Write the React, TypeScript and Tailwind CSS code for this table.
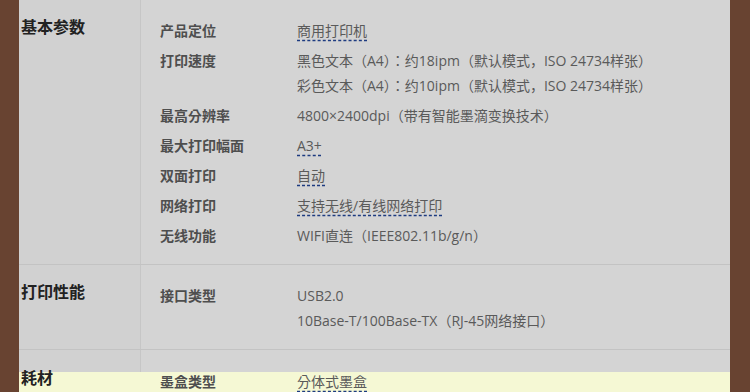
interface SpecRow {
  label: string;
  values: string[];
  dashed?: boolean;
}

interface SpecGroup {
  title: string;
  rows: SpecRow[];
}

const groups: SpecGroup[] = [
  {
    title: "基本参数",
    rows: [
      { label: "产品定位", values: ["商用打印机"], dashed: true },
      {
        label: "打印速度",
        values: [
          "黑色文本（A4）：约18ipm（默认模式，ISO 24734样张）",
          "彩色文本（A4）：约10ipm（默认模式，ISO 24734样张）",
        ],
      },
      { label: "最高分辨率", values: ["4800×2400dpi（带有智能墨滴变换技术）"] },
      { label: "最大打印幅面", values: ["A3+"], dashed: true },
      { label: "双面打印", values: ["自动"], dashed: true },
      { label: "网络打印", values: ["支持无线/有线网络打印"], dashed: true },
      { label: "无线功能", values: ["WIFI直连（IEEE802.11b/g/n）"] },
    ],
  },
  {
    title: "打印性能",
    rows: [
      {
        label: "接口类型",
        values: ["USB2.0", "10Base-T/100Base-TX（RJ-45网络接口）"],
      },
    ],
  },
];

const font = "font-['Open_Sans','Noto_Sans_CJK_KR','Noto_Sans_CJK_SC',sans-serif]";

function Row({ row }: { row: SpecRow }) {
  return (
    <div className="flex pt-[3px] pb-[2px]">
      <div className="w-[137px] shrink-0 text-[14px] font-bold leading-[25px] text-[#4e4e4e]">{row.label}</div>
      <div className="flex flex-col">
        {row.values.map((v, i) => (
          <div key={i} className="text-[14px] leading-[25px] text-[#5a5a5a]">
            {row.dashed ? (
              <span className="underline decoration-dashed decoration-[#1d3b80] underline-offset-[4px]">{v}</span>
            ) : (
              v
            )}
          </div>
        ))}
      </div>
    </div>
  );
}

function Group({ group }: { group: SpecGroup }) {
  return (
    <div className="flex shrink-0 border-b border-[#c3c3c3]">
      <div className="w-[122px] shrink-0 border-r border-[#c6c6c6] bg-[#d1d1d1] pl-[2px] pt-[15px] text-[16px] font-bold leading-[25px] text-[#222]">
        {group.title}
      </div>
      <div className="flex-1 pl-[19px] pt-[15px] pb-[14px]">
        {group.rows.map((r) => (
          <Row key={r.label} row={r} />
        ))}
      </div>
    </div>
  );
}

export default function App() {
  return (
    <div className={`flex h-[392px] w-[750px] overflow-hidden bg-[#684331] pl-[19px] pr-[20px] ${font}`}>
      <div className="flex w-[711px] flex-col bg-[#d4d4d4]">
        {groups.map((g) => (
          <Group key={g.title} group={g} />
        ))}

        {/* hovered row */}
        <div className="flex h-[22px] shrink-0">
          <div className="w-[122px] shrink-0 border-r border-[#c6c6c6] bg-[#d1d1d1]" />
          <div className="flex-1" />
        </div>
        <div className="flex h-[40px] shrink-0 bg-[#f5f8d4]">
          <div className="-mt-[6px] w-[122px] shrink-0 pl-[2px] text-[16px] font-bold leading-[25px] text-[#222]">
            耗材
          </div>
          <div className="-mt-[6px] flex-1 pl-[19px]">
            <Row row={{ label: "墨盒类型", values: ["分体式墨盒"], dashed: true }} />
          </div>
        </div>
      </div>
    </div>
  );
}
